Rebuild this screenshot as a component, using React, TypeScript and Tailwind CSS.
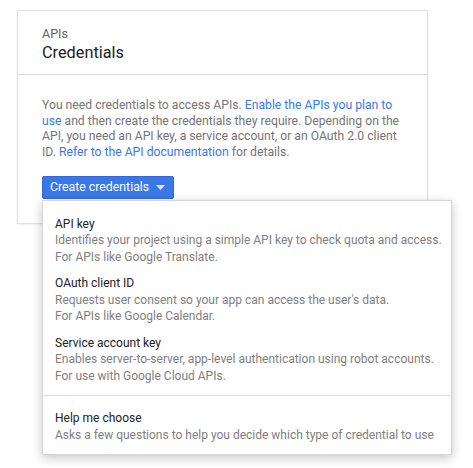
import React from 'react';

interface MenuItem {
  title: string;
  lines: string[];
}

const items: MenuItem[] = [
  {
    title: 'API key',
    lines: [
      'Identifies your project using a simple API key to check quota and access.',
      'For APIs like Google Translate.',
    ],
  },
  {
    title: 'OAuth client ID',
    lines: [
      "Requests user consent so your app can access the user's data.",
      'For APIs like Google Calendar.',
    ],
  },
  {
    title: 'Service account key',
    lines: [
      'Enables server-to-server, app-level authentication using robot accounts.',
      'For use with Google Cloud APIs.',
    ],
  },
];

const Item = ({ title, lines }: MenuItem) => (
  <div className="px-3 py-[5px] leading-[16.5px] text-[12px] cursor-pointer whitespace-nowrap">
    <div className="text-[#212121]">{title}</div>
    {lines.map((l) => (
      <div key={l} className="text-[#808080]">{l}</div>
    ))}
  </div>
);

export default function App() {
  return (
    <div
      className="w-[473px] h-[468px] bg-white pt-[10px] pl-[17px] text-[12.2px]"
      style={{ fontFamily: 'Roboto, "Noto Sans", sans-serif' }}
    >
      <div className="w-[411px] bg-white border border-[#e0e0e0] shadow-[0_1px_2px_rgba(0,0,0,0.06)]">
        {/* Header */}
        <div className="h-[64px] px-6 pt-[15px] border-b border-[#dadada]">
          <div className="text-[12.5px] leading-[15px] text-[#616161]">APIs</div>
          <div className="text-[16.3px] leading-[23px] text-[#212121]">Credentials</div>
        </div>

        {/* Body */}
        <div className="px-6 pt-[23px] pb-[24px]">
          <p className="leading-[15.7px] text-[#757575]">
            You need credentials to access APIs.{' '}
            <a className="text-[#3b78e7]">Enable the APIs you plan to use</a> and then create the
            credentials they require. Depending on the API, you need an API key, a service account,
            or an OAuth 2.0 client ID. <a className="text-[#3b78e7]">Refer to the API documentation</a>{' '}
            for details.
          </p>

          <div className="relative mt-[15px] inline-block">
            <button
              type="button"
              className="h-[23px] pl-[7px] pr-[8px] flex items-center gap-[7px] rounded-[2px] bg-[#3b78e7] border border-[#3367d6] text-white text-[12.3px]"
            >
              <span>Create credentials</span>
              <svg width="9" height="5" viewBox="0 0 9 5" className="mt-[1px]">
                <path d="M0 0h9L4.5 5z" fill="#dbe6fb" />
              </svg>
            </button>

            {/* Dropdown */}
            <div className="absolute left-0 top-full mt-[1px] w-[410px] bg-white border border-[#d6d6d6] shadow-[0_3px_10px_rgba(0,0,0,0.22)] z-10">
              <div className="pt-[10px] pb-[6px]">
                {items.map((it) => (
                  <Item key={it.title} {...it} />
                ))}
              </div>
              <div className="border-t border-[#e0e0e0]" />
              <div className="pt-[9px] pb-[6px]">
                <Item
                  title="Help me choose"
                  lines={['Asks a few questions to help you decide which type of credential to use']}
                />
              </div>
            </div>
          </div>
        </div>
      </div>
    </div>
  );
}
